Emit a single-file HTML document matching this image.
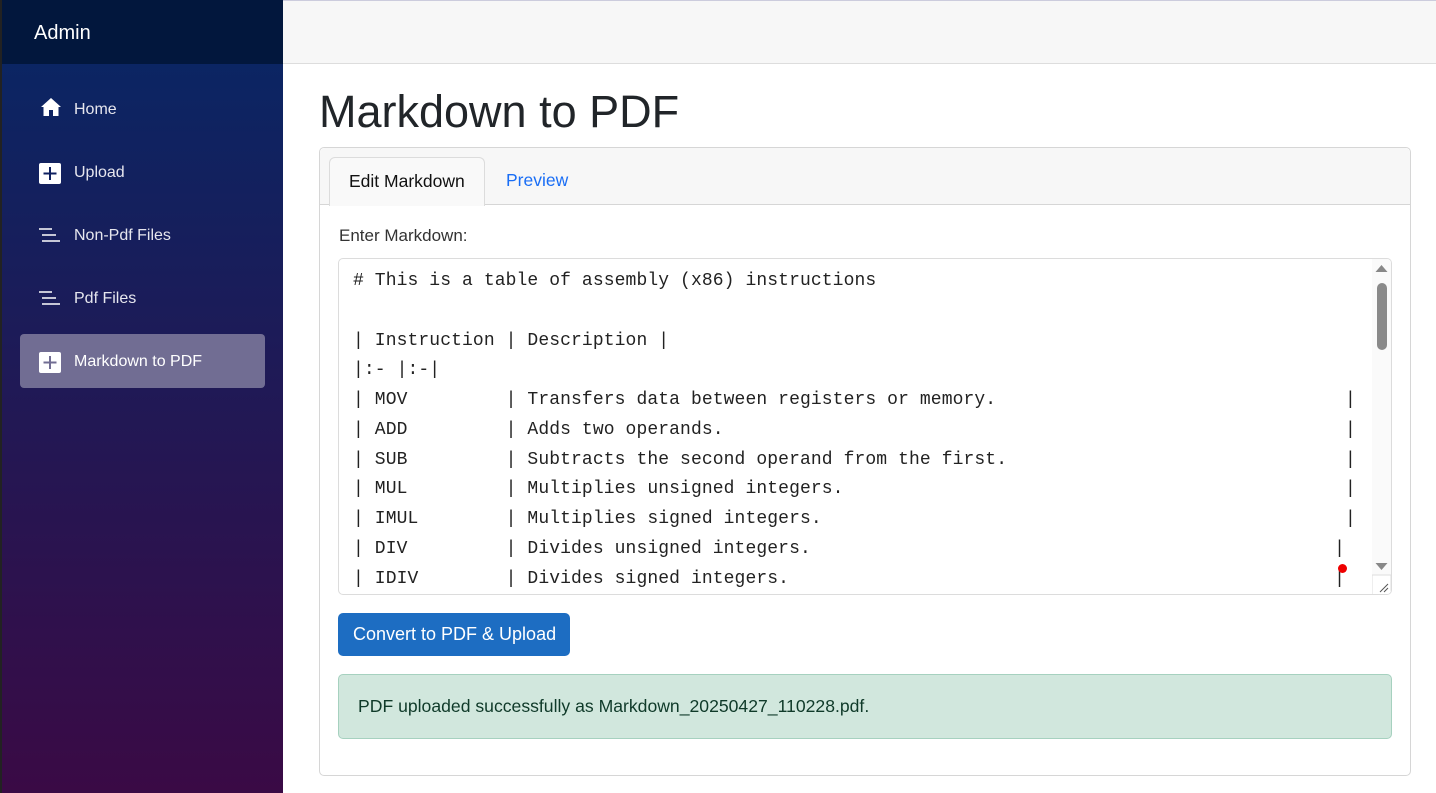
<!DOCTYPE html>
<html><head><meta charset="utf-8"><style>
*{box-sizing:border-box;margin:0;padding:0}
body{width:1436px;height:793px;overflow:hidden;font-family:"Liberation Sans",sans-serif;background:#fff;position:relative}
.side{position:absolute;left:0;top:0;width:283px;height:793px;background:linear-gradient(#0b2563 64px,#3a0a45 793px);border-left:2px solid #222}
.brand{height:64px;background:#02173d;color:#fff;font-size:20px;padding:22px 0 0 32px}
.nav{position:absolute;left:18px;width:245px;height:54px;color:#e6e6ee;font-size:16px;padding:19px 0 0 54px;border-radius:4px}
.nav.act{background:#716d93;color:#fff}
.ic{position:absolute;left:20px;top:17px}
.top{position:absolute;left:283px;top:0;right:0;height:64px;background:#f7f7f7;border-bottom:1px solid #ddd;border-top:1px solid #ccd}
h1{position:absolute;left:319px;top:86px;font-size:45px;font-weight:400;color:#212529}
.card{position:absolute;left:319px;top:147px;width:1092px;height:629px;border:1px solid #d6d6d6;border-radius:5px}
.chead{height:57px;background:#f7f7f7;border-bottom:1px solid #d6d6d6;border-radius:5px 5px 0 0;position:relative}
.tab{position:absolute;top:9px;height:48px;font-size:17.5px;padding:13px 19px 0}
.tab.a{left:9px;background:#f9f9f9;border:1px solid #dcdcdc;border-bottom:none;border-radius:6px 6px 0 0;color:#111;height:49px}
.lbl{position:absolute;left:339px;top:226px;font-size:17px;color:#333}
.ta{position:absolute;left:338px;top:258px;width:1054px;height:337px;border:1px solid #dcdcdc;border-radius:5px;overflow:hidden}
pre{position:absolute;left:14px;top:8px;font-family:"Liberation Mono",monospace;font-size:18px;line-height:29.75px;color:#222;letter-spacing:0.1px}
.sb{position:absolute;right:0;top:0;width:19px;height:336px;background:#fafafa}
.btn{position:absolute;left:338px;top:613px;width:232px;height:43px;background:#1d6dc2;border-radius:5px;color:#fff;font-size:18px;padding:11px 0 0 15px}
.al{position:absolute;left:338px;top:674px;width:1054px;height:65px;background:#d1e7dd;border:1px solid #a6d1bf;border-radius:5px;color:#0f3a29;font-size:17.6px;padding:21px 0 0 19px}
</style></head><body>
<div class="side">
<div class="brand">Admin</div>
<div class="nav" style="top:82px"><svg class="ic" width="22" height="20" viewBox="0 0 22 20" style="top:15px"><path d="M11 1 L1 10 H3.5 V19 H9 V13 H13 V19 H18.5 V10 H21 Z" fill="#fff"/></svg>Home</div>
<div class="nav" style="top:145px"><svg class="ic" width="24" height="24" viewBox="0 0 24 24" style="left:18px"><rect x="1" y="1" width="22" height="21" rx="2" fill="#fff"/><path d="M12 5v13M5.5 11.5h13" stroke="#0f2060" stroke-width="2"/></svg>Upload</div>
<div class="nav" style="top:208px"><svg class="ic" width="24" height="18" viewBox="0 0 24 18" style="left:18px;top:19px"><path d="M1 2h13M4 8h14M4 14h18" stroke="#fff" stroke-width="1.6"/></svg>Non-Pdf Files</div>
<div class="nav" style="top:271px"><svg class="ic" width="24" height="18" viewBox="0 0 24 18" style="left:18px;top:19px"><path d="M1 2h13M4 8h14M4 14h18" stroke="#fff" stroke-width="1.6"/></svg>Pdf Files</div>
<div class="nav act" style="top:334px"><svg class="ic" width="24" height="24" viewBox="0 0 24 24" style="left:18px"><rect x="1" y="1" width="22" height="21" rx="2" fill="#fff"/><path d="M12 5v13M5.5 11.5h13" stroke="#716d93" stroke-width="2"/></svg>Markdown to PDF</div>
</div>
<div class="top"></div>
<h1>Markdown to PDF</h1>
<div class="card"><div class="chead"><div class="tab a">Edit Markdown</div><div class="tab" style="left:167px;color:#1a6ef5">Preview</div></div></div>
<div class="lbl">Enter Markdown:</div>
<div class="ta"><pre># This is a table of assembly (x86) instructions

| Instruction | Description |
|:- |:-|
| MOV         | Transfers data between registers or memory.                                |
| ADD         | Adds two operands.                                                         |
| SUB         | Subtracts the second operand from the first.                               |
| MUL         | Multiplies unsigned integers.                                              |
| IMUL        | Multiplies signed integers.                                                |
| DIV         | Divides unsigned integers.                                                |
| IDIV        | Divides signed integers.                                                  |</pre>
<div class="sb"><svg width="19" height="336" style="position:absolute;left:0;top:0"><path d="M9.5 6l6 7h-12z" fill="#888"/><rect x="5" y="24" width="10" height="67" rx="5" fill="#8a8a8a"/><path d="M9.5 311l6-7h-12z" fill="#888"/><rect x="0" y="316" width="19" height="20" fill="#fff" stroke="#ddd"/><path d="M8 333l8-8M12 333l4-4" stroke="#555"/></svg></div>
<div style="position:absolute;left:999px;top:305px;width:9px;height:9px;border-radius:50%;background:#e00"></div>
</div>
<div class="btn">Convert to PDF &amp; Upload</div>
<div class="al">PDF uploaded successfully as Markdown_20250427_110228.pdf.</div>
</body></html>
